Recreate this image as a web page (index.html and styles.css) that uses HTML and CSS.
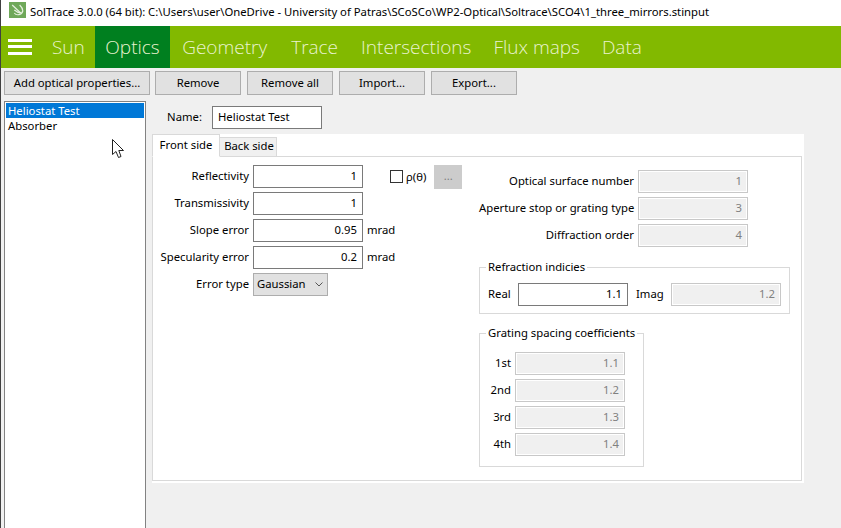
FILE: index.html
```html
<!DOCTYPE html>
<html>

<head>
    <title>SolTrace</title>
    <link rel="stylesheet" href="styles.css">
</head>

<body>
    <div class="titlebar">
        <svg class="appicon" width="17" height="16" viewBox="0 0 16 16" preserveAspectRatio="none">
            <rect width="16" height="16" fill="#6fa85a" />
            <path d="M3 3 11 11M5 11c2 3 7 2 8-2 0-2-1-4-3-6M5 8c2 2 4 3 7 3" fill="none" stroke="#e6f0df" stroke-width="1.1" />
        </svg>
        <span>SolTrace 3.0.0 (64 bit): C:\Users\user\OneDrive - University of Patras\SCoSCo\WP2-Optical\Soltrace\SCO4\1_three_mirrors.stinput</span>
    </div>

    <div class="nav">
        <svg class="burger" width="24" height="16" viewBox="0 0 24 16">
            <rect y="0" width="24" height="3" fill="#fff" />
            <rect y="6" width="24" height="3" fill="#fff" />
            <rect y="13" width="24" height="3" fill="#fff" />
        </svg>
        <div class="navitem sun">Sun</div>
        <div class="navitem active">Optics</div>
        <div class="navitem roomy">Geometry</div>
        <div class="navitem roomy">Trace</div>
        <div class="navitem">Intersections</div>
        <div class="navitem">Flux maps</div>
        <div class="navitem">Data</div>
    </div>

    <div class="toolbar">
        <button class="btn wide">Add optical properties...</button>
        <button class="btn">Remove</button>
        <button class="btn">Remove all</button>
        <button class="btn">Import...</button>
        <button class="btn">Export...</button>
    </div>

    <div class="main">
        <div class="list">
            <div class="listitem selected">Heliostat Test</div>
            <div class="listitem">Absorber</div>
        </div>

        <div class="editor">
            <div class="namerow">
                <label>Name:</label>
                <div class="field name">Heliostat Test</div>
            </div>

            <div class="notebook">
                <div class="tabs">
                    <div class="tab current">Front side</div>
                    <div class="tab">Back side</div>
                </div>
                <div class="page">
                    <div class="leftcol">
                        <label>Reflectivity</label>
                        <div class="field num">1</div>
                        <div class="rho">
                            <span class="check"></span>
                            <span>ρ(θ)</span>
                            <button class="btn dots">...</button>
                        </div>
                        <label>Transmissivity</label>
                        <div class="field num">1</div>
                        <span></span>
                        <label>Slope error</label>
                        <div class="field num">0.95</div>
                        <span class="unit">mrad</span>
                        <label>Specularity error</label>
                        <div class="field num">0.2</div>
                        <span class="unit">mrad</span>
                        <label>Error type</label>
                        <div class="select">
                            <span>Gaussian</span>
                            <svg width="8" height="5" viewBox="0 0 8 5">
                                <path d="M0.5 0.5 4 4 7.5 0.5" fill="none" stroke="#555" />
                            </svg>
                        </div>
                    </div>

                    <div class="rightcol">
                        <div class="surface">
                            <label>Optical surface number</label>
                            <div class="field num off">1</div>
                            <label>Aperture stop or grating type</label>
                            <div class="field num off">3</div>
                            <label>Diffraction order</label>
                            <div class="field num off">4</div>
                        </div>

                        <fieldset class="refraction">
                            <legend>Refraction indicies</legend>
                            <label>Real</label>
                            <div class="field num">1.1</div>
                            <label class="imag">Imag</label>
                            <div class="field num off">1.2</div>
                        </fieldset>

                        <fieldset class="grating">
                            <legend>Grating spacing coefficients</legend>
                            <label>1st</label>
                            <div class="field num off">1.1</div>
                            <label>2nd</label>
                            <div class="field num off">1.2</div>
                            <label>3rd</label>
                            <div class="field num off">1.3</div>
                            <label>4th</label>
                            <div class="field num off">1.4</div>
                        </fieldset>
                    </div>
                </div>
            </div>
        </div>
    </div>

    <svg class="cursor" width="13" height="20" viewBox="0 0 13 20">
        <path d="M0.5 0.5V15.5L4 12.5 6.5 18.5 9 17.5 6.8 11.5H11.5Z" fill="#fff" stroke="#222" />
    </svg>
</body>

</html>
```

FILE: styles.css
```css
* {
    box-sizing: border-box;
}

html,
body {
    margin: 0;
    height: 100%;
}

body {
    height: 528px;
    overflow: hidden;
    display: flex;
    flex-direction: column;
    background-color: #f0f0f0;
    border-left: 1px solid #404040;
    font-family: "Noto Sans", sans-serif;
    font-size: 11.3px;
    color: #000;
}

label {
    padding-bottom: 2px;
    text-align: right;
    white-space: nowrap;
}

.titlebar {
    height: 26px;
    flex: none;
    display: flex;
    align-items: center;
    gap: 4px;
    padding: 0 0 4px 8px;
    background-color: white;
}

.appicon {
    margin-bottom: 2px;
}

.nav {
    height: 42px;
    flex: none;
    display: flex;
    align-items: center;
    background-color: #82b900;
    font-family: "Open Sans", sans-serif;
    font-weight: 300;
    font-size: 19px;
    color: #e9f3cf;
}

.burger {
    margin: 0 9px 0 7px;
}

.navitem {
    height: 100%;
    display: flex;
    align-items: center;
    padding: 0 11px;
}

.navitem.sun {
    padding-right: 10px;
}

.navitem.roomy {
    padding: 0 12px;
}

.navitem.active {
    padding: 0 10.5px;
    background-color: #007f1f;
}

.toolbar {
    flex: none;
    display: flex;
    gap: 6px;
    padding: 3px 0 0 3px;
}

.btn {
    width: 86px;
    height: 24px;
    padding: 0 0 2px;
    font: inherit;
    color: #000;
    background-color: #e1e1e1;
    border: 1px solid #adadad;
}

.btn.wide {
    width: 146px;
    margin-right: -1px;
}

.main {
    flex: 1;
    min-height: 0;
    display: flex;
    gap: 6px;
    padding: 6px 0 0 3px;
}

.list {
    width: 142px;
    padding: 1px;
    background-color: white;
    border: 1px solid #828282;
    border-bottom: none;
}

.listitem {
    height: 15px;
    line-height: 15px;
    padding-left: 2px;
}

.listitem.selected {
    background-color: #0078d7;
    color: white;
}

.editor {
    width: 652px;
}

.namerow {
    display: flex;
    align-items: center;
    gap: 10px;
    padding: 5px 0 0 15px;
}

.namerow label {
    width: 35px;
}

.field {
    width: 110px;
    height: 23px;
    line-height: 19px;
    padding: 0 5px;
    background-color: white;
    border: 1px solid #7a7a7a;
}

.field.num {
    text-align: right;
}

.field.off {
    color: #808080;
    background-color: #f0f0f0;
    border-color: #c8c8c8;
    box-shadow: inset 0 0 0 1px #fff;
}

.notebook {
    margin-top: 5px;
    height: 349px;
    background-color: white;
    padding-right: 2px;
    padding-bottom: 2px;
    display: flex;
    flex-direction: column;
}

.tabs {
    flex: none;
    height: 23px;
    display: flex;
    align-items: flex-end;
    margin-bottom: -1px;
    position: relative;
}

.tab {
    height: 20px;
    width: 57px;
    padding-left: 2px;
    line-height: 16px;
    text-align: center;
    background-color: #f0f0f0;
    border: 1px solid #d9d9d9;
    border-left: none;
}

.tab.current {
    height: 23px;
    width: 68px;
    padding-left: 0;
    line-height: 20px;
    background-color: white;
    border-left: 1px solid #d9d9d9;
    border-bottom-color: white;
}

.page {
    flex: 1;
    display: flex;
    border: 1px solid #d9d9d9;
}

.leftcol {
    width: 326px;
    flex: none;
    display: grid;
    grid-template-columns: 96px 110px 1fr;
    grid-auto-rows: 23px;
    gap: 4px;
    align-items: center;
    align-content: start;
    padding-top: 8px;
}

.unit {
    padding-bottom: 2px;
}

.rho {
    display: flex;
    align-items: center;
    margin-left: 23px;
}

.check {
    width: 13px;
    height: 13px;
    margin-right: 3px;
    background-color: white;
    border: 1px solid #333;
}

.btn.dots {
    width: 28px;
    margin-left: 8px;
    color: #808080;
    background-color: #cccccc;
    border-color: #cccccc;
}

.select {
    width: 75px;
    height: 23px;
    display: flex;
    align-items: center;
    justify-content: space-between;
    padding: 0 4px 2px 3px;
    background-color: #e1e1e1;
    border: 1px solid #adadad;
}

.select svg {
    margin-top: 2px;
}

.rightcol {
    padding-top: 13px;
}

.surface {
    display: grid;
    grid-template-columns: 155px 110px;
    grid-auto-rows: 23px;
    gap: 4px;
    align-items: center;
}

fieldset {
    min-width: 0;
    margin: 0;
    border: 1px solid #d9d9d9;
}

legend {
    padding: 0 2px;
    line-height: 16px;
    white-space: nowrap;
}

.refraction {
    width: 311px;
    margin-top: 12px;
    padding: 8px 8px 7px;
    display: grid;
    grid-template-columns: 30px 110px 43px 110px;
    align-items: center;
}

.refraction legend {
    margin-left: -2px;
}

.refraction label {
    padding-bottom: 3px;
    text-align: left;
}

.refraction .imag {
    padding-left: 8px;
}

.grating {
    width: 165px;
    margin-top: 11px;
    padding: 11px 18px 10px 0;
    display: grid;
    grid-template-columns: 31px 110px;
    grid-auto-rows: 23px;
    gap: 4px;
    align-items: center;
}

.grating legend {
    margin-left: 6px;
}

.cursor {
    position: absolute;
    left: 112px;
    top: 139px;
}
```
